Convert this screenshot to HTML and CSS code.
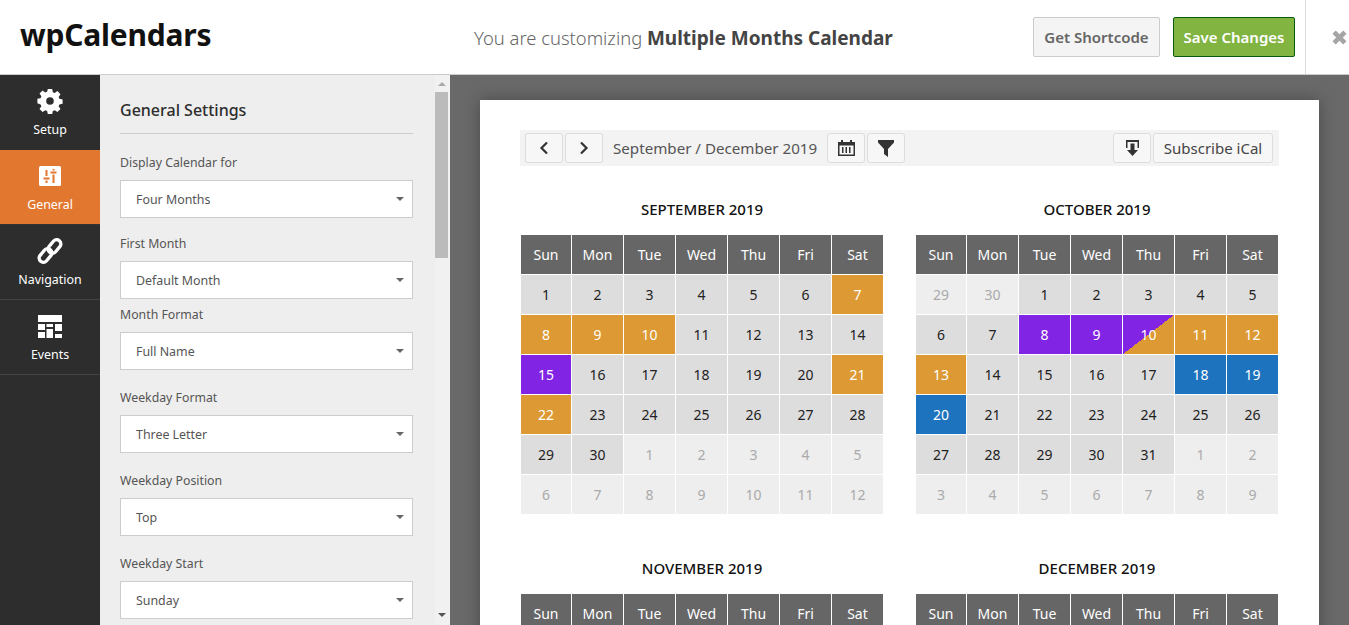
FILE: index.html
```html
<!DOCTYPE html>
<html lang="en">
<head>
    <meta charset="UTF-8">
    <meta name="viewport" content="width=device-width, initial-scale=1.0">
    <title>wpCalendars - Multiple Months Calendar</title>
    <link rel="stylesheet" href="styles.css">
</head>

<body>
    <div class="app">
        <header class="topbar">
            <div class="logo">wpCalendars</div>
            <div class="customizing">You are customizing <b>Multiple Months Calendar</b></div>
            <div class="actions">
                <button class="btn btn-grey">Get Shortcode</button>
                <button class="btn btn-green">Save Changes</button>
            </div>
            <div class="close">
                <svg width="15" height="15" viewBox="0 0 16 16"><path d="M4 .5l4 4 4-4L15.500 4l-4 4 4 4-3.500 3.500-4-4-4 4L.5 12l4-4-4-4z" fill="#a5a5a5"/></svg>
            </div>
        </header>

        <div class="workspace">
            <nav class="sidenav">
                <a class="nav-item nav-before-active">
                    <span class="nav-icon"><svg width="26" height="26" viewBox="0 0 26 26"><path fill-rule="evenodd" fill="#fff" d="M10.800 1h4.400l.6 3.200 1.900.8 2.700-1.900 3.100 3.100-1.900 2.700.8 1.900 3.200.6v4.400l-3.200.6-.8 1.900 1.900 2.700-3.100 3.100-2.700-1.900-1.900.8-.6 3.200h-4.400l-.6-3.200-1.900-.8-2.700 1.900-3.100-3.100 1.900-2.700-.8-1.900L.4 15.200v-4.400l3.200-.6.8-1.900-1.900-2.700 3.100-3.100 2.700 1.900 1.900-.8zM13 9.200a3.800 3.800 0 1 0 0 7.600 3.800 3.800 0 0 0 0-7.600z"/></svg></span>
                    <span>Setup</span>
                </a>
                <a class="nav-item active">
                    <span class="nav-icon"><svg width="22" height="20" viewBox="0 0 22 20"><rect width="22" height="20" rx="1.500" fill="#fff"/><path d="M7.500 4v6M7.500 14.500V17M14.500 3v1.500M14.500 8.500V17M4.500 12.500h6M11.500 6.500h6" stroke="#e27730" stroke-width="2" fill="none"/></svg></span>
                    <span>General</span>
                </a>
                <a class="nav-item">
                    <span class="nav-icon"><svg width="26" height="26" viewBox="0 0 26 26"><g fill="none" stroke="#fff" stroke-width="3.400"><rect x="-7.500" y="-4.200" width="15" height="8.400" rx="4.200" transform="translate(8.500 17.500) rotate(-50)"/><rect x="-7.500" y="-4.200" width="15" height="8.400" rx="4.200" transform="translate(17.500 8.500) rotate(-50)"/></g></svg></span>
                    <span>Navigation</span>
                </a>
                <a class="nav-item">
                    <span class="nav-icon"><svg width="24" height="23" viewBox="0 0 24 23" fill="#fff"><path d="M0 0h24v7H0zM0 9h7v6H0zM8.500 9H15v3H8.500zM17 9h7v7h-7zM0 17h7v6H0zM8.500 14H15v9H8.500zM17 19h7v4h-7z"/></svg></span>
                    <span>Events</span>
                </a>
            </nav>

            <aside class="settings">
                <div class="settings-body">
                    <h2 class="settings-title">General Settings</h2>

                    <div class="field field-first">
                        <label>Display Calendar for</label>
                        <div class="dropdown">Four Months</div>
                    </div>
                    <div class="field field-tight">
                        <label>First Month</label>
                        <div class="dropdown">Default Month</div>
                    </div>
                    <div class="field">
                        <label>Month Format</label>
                        <div class="dropdown">Full Name</div>
                    </div>
                    <div class="field">
                        <label>Weekday Format</label>
                        <div class="dropdown">Three Letter</div>
                    </div>
                    <div class="field">
                        <label>Weekday Position</label>
                        <div class="dropdown">Top</div>
                    </div>
                    <div class="field">
                        <label>Weekday Start</label>
                        <div class="dropdown">Sunday</div>
                    </div>
                </div>
                <div class="scrollbar">
                    <span class="arrow arrow-up"></span>
                    <span class="thumb"></span>
                    <span class="arrow arrow-down"></span>
                </div>
            </aside>

            <main class="preview">
                <div class="sheet">
                    <div class="toolbar">
                        <button class="tool">
                            <svg width="10" height="14" viewBox="0 0 10 14"><path d="M8 1.500L2.500 7 8 12.500" fill="none" stroke="#333" stroke-width="2.200"/></svg>
                        </button>
                        <button class="tool">
                            <svg width="10" height="14" viewBox="0 0 10 14"><path d="M2 1.500L7.500 7 2 12.500" fill="none" stroke="#333" stroke-width="2.200"/></svg>
                        </button>
                        <span class="range">September / December 2019</span>
                        <button class="tool">
                            <svg width="17" height="16" viewBox="0 0 17 16"><path fill="#333" fill-rule="evenodd" d="M0 2h3V0h2v2h7V0h2v2h3v14H0zM1.500 5.500v9h14v-9zM4 7h1.500v6H4zM7.500 7H9v6H7.500zM11 7h1.500v6H11z"/></svg>
                        </button>
                        <button class="tool">
                            <svg width="16" height="17" viewBox="0 0 16 17"><path fill="#333" d="M0 0h16v2.500L10 9v8l-4-3V9L0 2.500z"/></svg>
                        </button>
                        <span class="spacer"></span>
                        <button class="tool">
                            <svg width="13" height="16" viewBox="0 0 13 16"><path fill="#333" d="M0 0h13v8h-1.500V2h-10v6H0zM4.500 3.500h4V10H12l-5.500 6L1 10h3.500z"/></svg>
                        </button>
                        <button class="tool tool-text">Subscribe iCal</button>
                    </div>

                    <div class="months">
                        <section class="month">
                            <h3>SEPTEMBER 2019</h3>
                            <div class="cal">
                                <div class="wd">Sun</div><div class="wd">Mon</div><div class="wd">Tue</div><div class="wd">Wed</div><div class="wd">Thu</div><div class="wd">Fri</div><div class="wd">Sat</div>
                                <div>1</div><div>2</div><div>3</div><div>4</div><div>5</div><div>6</div><div class="orange">7</div>
                                <div class="orange">8</div><div class="orange">9</div><div class="orange">10</div><div>11</div><div>12</div><div>13</div><div>14</div>
                                <div class="purple">15</div><div>16</div><div>17</div><div>18</div><div>19</div><div>20</div><div class="orange">21</div>
                                <div class="orange">22</div><div>23</div><div>24</div><div>25</div><div>26</div><div>27</div><div>28</div>
                                <div>29</div><div>30</div><div class="off">1</div><div class="off">2</div><div class="off">3</div><div class="off">4</div><div class="off">5</div>
                                <div class="off">6</div><div class="off">7</div><div class="off">8</div><div class="off">9</div><div class="off">10</div><div class="off">11</div><div class="off">12</div>
                            </div>
                        </section>
                        <section class="month">
                            <h3>OCTOBER 2019</h3>
                            <div class="cal">
                                <div class="wd">Sun</div><div class="wd">Mon</div><div class="wd">Tue</div><div class="wd">Wed</div><div class="wd">Thu</div><div class="wd">Fri</div><div class="wd">Sat</div>
                                <div class="off">29</div><div class="off">30</div><div>1</div><div>2</div><div>3</div><div>4</div><div>5</div>
                                <div>6</div><div>7</div><div class="purple">8</div><div class="purple">9</div><div class="split">10</div><div class="orange">11</div><div class="orange">12</div>
                                <div class="orange">13</div><div>14</div><div>15</div><div>16</div><div>17</div><div class="blue">18</div><div class="blue">19</div>
                                <div class="blue">20</div><div>21</div><div>22</div><div>23</div><div>24</div><div>25</div><div>26</div>
                                <div>27</div><div>28</div><div>29</div><div>30</div><div>31</div><div class="off">1</div><div class="off">2</div>
                                <div class="off">3</div><div class="off">4</div><div class="off">5</div><div class="off">6</div><div class="off">7</div><div class="off">8</div><div class="off">9</div>
                            </div>
                        </section>
                        <section class="month">
                            <h3>NOVEMBER 2019</h3>
                            <div class="cal">
                                <div class="wd">Sun</div><div class="wd">Mon</div><div class="wd">Tue</div><div class="wd">Wed</div><div class="wd">Thu</div><div class="wd">Fri</div><div class="wd">Sat</div>
                            </div>
                        </section>
                        <section class="month">
                            <h3>DECEMBER 2019</h3>
                            <div class="cal">
                                <div class="wd">Sun</div><div class="wd">Mon</div><div class="wd">Tue</div><div class="wd">Wed</div><div class="wd">Thu</div><div class="wd">Fri</div><div class="wd">Sat</div>
                            </div>
                        </section>
                    </div>
                </div>
            </main>
        </div>
    </div>
</body>

</html>
```

FILE: styles.css
```css
* {
    box-sizing: border-box;
}

body {
    margin: 0;
    font-family: 'Noto Sans', 'Open Sans', sans-serif;
    color: #333;
    overflow: hidden;
}

button {
    font-family: inherit;
}

.app {
    height: 625px;
    display: flex;
    flex-direction: column;
    overflow: hidden;
}

/* top bar */
.topbar {
    height: 75px;
    flex: none;
    display: flex;
    align-items: center;
    background: #fff;
    border-bottom: 1px solid #ccc;
}

.logo {
    width: 474px;
    padding: 0 0 5px 20px;
    font-size: 30px;
    font-weight: 700;
    color: #111;
    letter-spacing: -0.2px;
}

.customizing {
    width: 539px;
    padding-top: 2px;
    font-size: 18.400px;
    font-weight: 300;
    color: #666;
}

.customizing b {
    font-size: 19px;
    font-weight: 700;
    color: #444;
}

.actions {
    display: flex;
    gap: 13px;
    width: 292px;
    padding-left: 20px;
}

.btn {
    height: 40px;
    border-radius: 2px;
    font-size: 15px;
    font-weight: 600;
    padding: 0;
}

.btn-grey {
    width: 127px;
    background: #f4f4f4;
    border: 1px solid #ccc;
    color: #666;
}

.btn-green {
    width: 122px;
    background: #81b441;
    border: 1px solid #0b5a0e;
    color: #fff;
}

.close {
    flex: 1;
    align-self: stretch;
    display: flex;
    align-items: center;
    justify-content: flex-end;
    padding-right: 2px;
    border-left: 1px solid #ddd;
}

/* main area */
.workspace {
    flex: 1;
    display: flex;
    min-height: 0;
}

.sidenav {
    width: 100px;
    flex: none;
    background: #2d2d2d;
}

.nav-item {
    height: 75px;
    display: flex;
    flex-direction: column;
    align-items: center;
    padding-top: 13px;
    border-bottom: 1px solid #444;
    font-size: 12.400px;
    line-height: 18px;
    color: #fff;
}

.nav-icon {
    height: 26px;
    margin-bottom: 7px;
    display: flex;
    align-items: center;
    justify-content: center;
}

.nav-before-active {
    border-bottom-color: #2d2d2d;
}

.nav-item.active {
    background: #e27730;
    border-bottom-color: #333;
}

.settings {
    width: 350px;
    flex: none;
    display: flex;
    background: #eee;
}

.settings-body {
    flex: 1;
    padding: 0 22px 0 20px;
}

.settings-title {
    margin: 0 0 19px;
    height: 59px;
    padding-top: 23px;
    border-bottom: 1px solid #ccc;
    font-size: 16px;
    line-height: 24px;
    font-weight: 500;
    color: #2d2d2d;
}

.field {
    margin-bottom: 18px;
}

.field-first {
    margin-bottom: 16px;
}

.field-tight {
    margin-bottom: 6px;
}

.field label {
    display: block;
    height: 18px;
    margin-bottom: 9px;
    padding-top: 1px;
    font-size: 12.300px;
    line-height: 18px;
    color: #555;
}

.dropdown {
    height: 38px;
    padding: 1px 0 0 15px;
    background: #fff;
    border: 1px solid #ccc;
    font-size: 12.400px;
    line-height: 36px;
    color: #555;
    position: relative;
}

.dropdown::after {
    content: '';
    position: absolute;
    right: 8px;
    top: 16px;
    border: 4px solid transparent;
    border-top: 4px solid #666;
    border-bottom: 0;
}

.scrollbar {
    width: 15px;
    flex: none;
    display: flex;
    flex-direction: column;
    align-items: flex-start;
    background: #f1f1f1;
    position: relative;
}

.thumb {
    width: 13px;
    height: 166px;
    background: #bbb;
    margin-top: 17px;
}

.arrow {
    position: absolute;
    left: 3px;
    border: 4px solid transparent;
}

.arrow-up {
    top: 7px;
    border-top: 0;
    border-bottom-color: #aaa;
}

.arrow-down {
    bottom: 8px;
    border-bottom: 0;
    border-top-color: #555;
}

/* calendar preview */
.preview {
    flex: 1;
    min-width: 0;
    background: #696969;
    padding: 25px 30px 0;
}

.sheet {
    background: #fff;
    padding: 30px 40px;
    box-shadow: 0 0 15px rgba(0, 0, 0, 0.3);
}

.toolbar {
    height: 36px;
    display: flex;
    align-items: center;
    gap: 2px;
    padding: 0 6px 0 5px;
    background: #f3f3f3;
}

.tool {
    width: 38px;
    height: 30px;
    padding: 0;
    display: flex;
    align-items: center;
    justify-content: center;
    background: #f7f7f7;
    border: 1px solid #ddd;
    border-radius: 3px;
    font-size: 15px;
    color: #444;
}

.tool-text {
    width: 120px;
}

.range {
    margin: 0 8px;
    font-size: 15.150px;
    color: #555;
}

.spacer {
    flex: 1;
}

.months {
    display: grid;
    grid-template-columns: 1fr 1fr;
    gap: 42px 33px;
    margin-top: 31px;
    padding: 0 1px;
}

.month h3 {
    margin: 0 0 14px;
    font-size: 15px;
    line-height: 24px;
    font-weight: 500;
    color: #111;
    text-align: center;
}

.cal {
    display: grid;
    grid-template-columns: 50px repeat(6, 1fr);
    grid-auto-rows: 39px;
    gap: 1px;
}

.cal div {
    display: flex;
    align-items: center;
    justify-content: center;
    background: #ddd;
    font-size: 14px;
    color: #222;
}

.cal .wd {
    background: #666;
    color: #fff;
}

.cal .off {
    background: #eee;
    color: #aaa;
}

.cal .orange {
    background: #dd9933;
    color: #fff;
}

.cal .purple {
    background: #8224e3;
    color: #fff;
}

.cal .blue {
    background: #1e73be;
    color: #fff;
}

.cal .split {
    background: linear-gradient(to bottom right, #8224e3 50%, #dd9933 50%);
    color: #fff;
}
```
